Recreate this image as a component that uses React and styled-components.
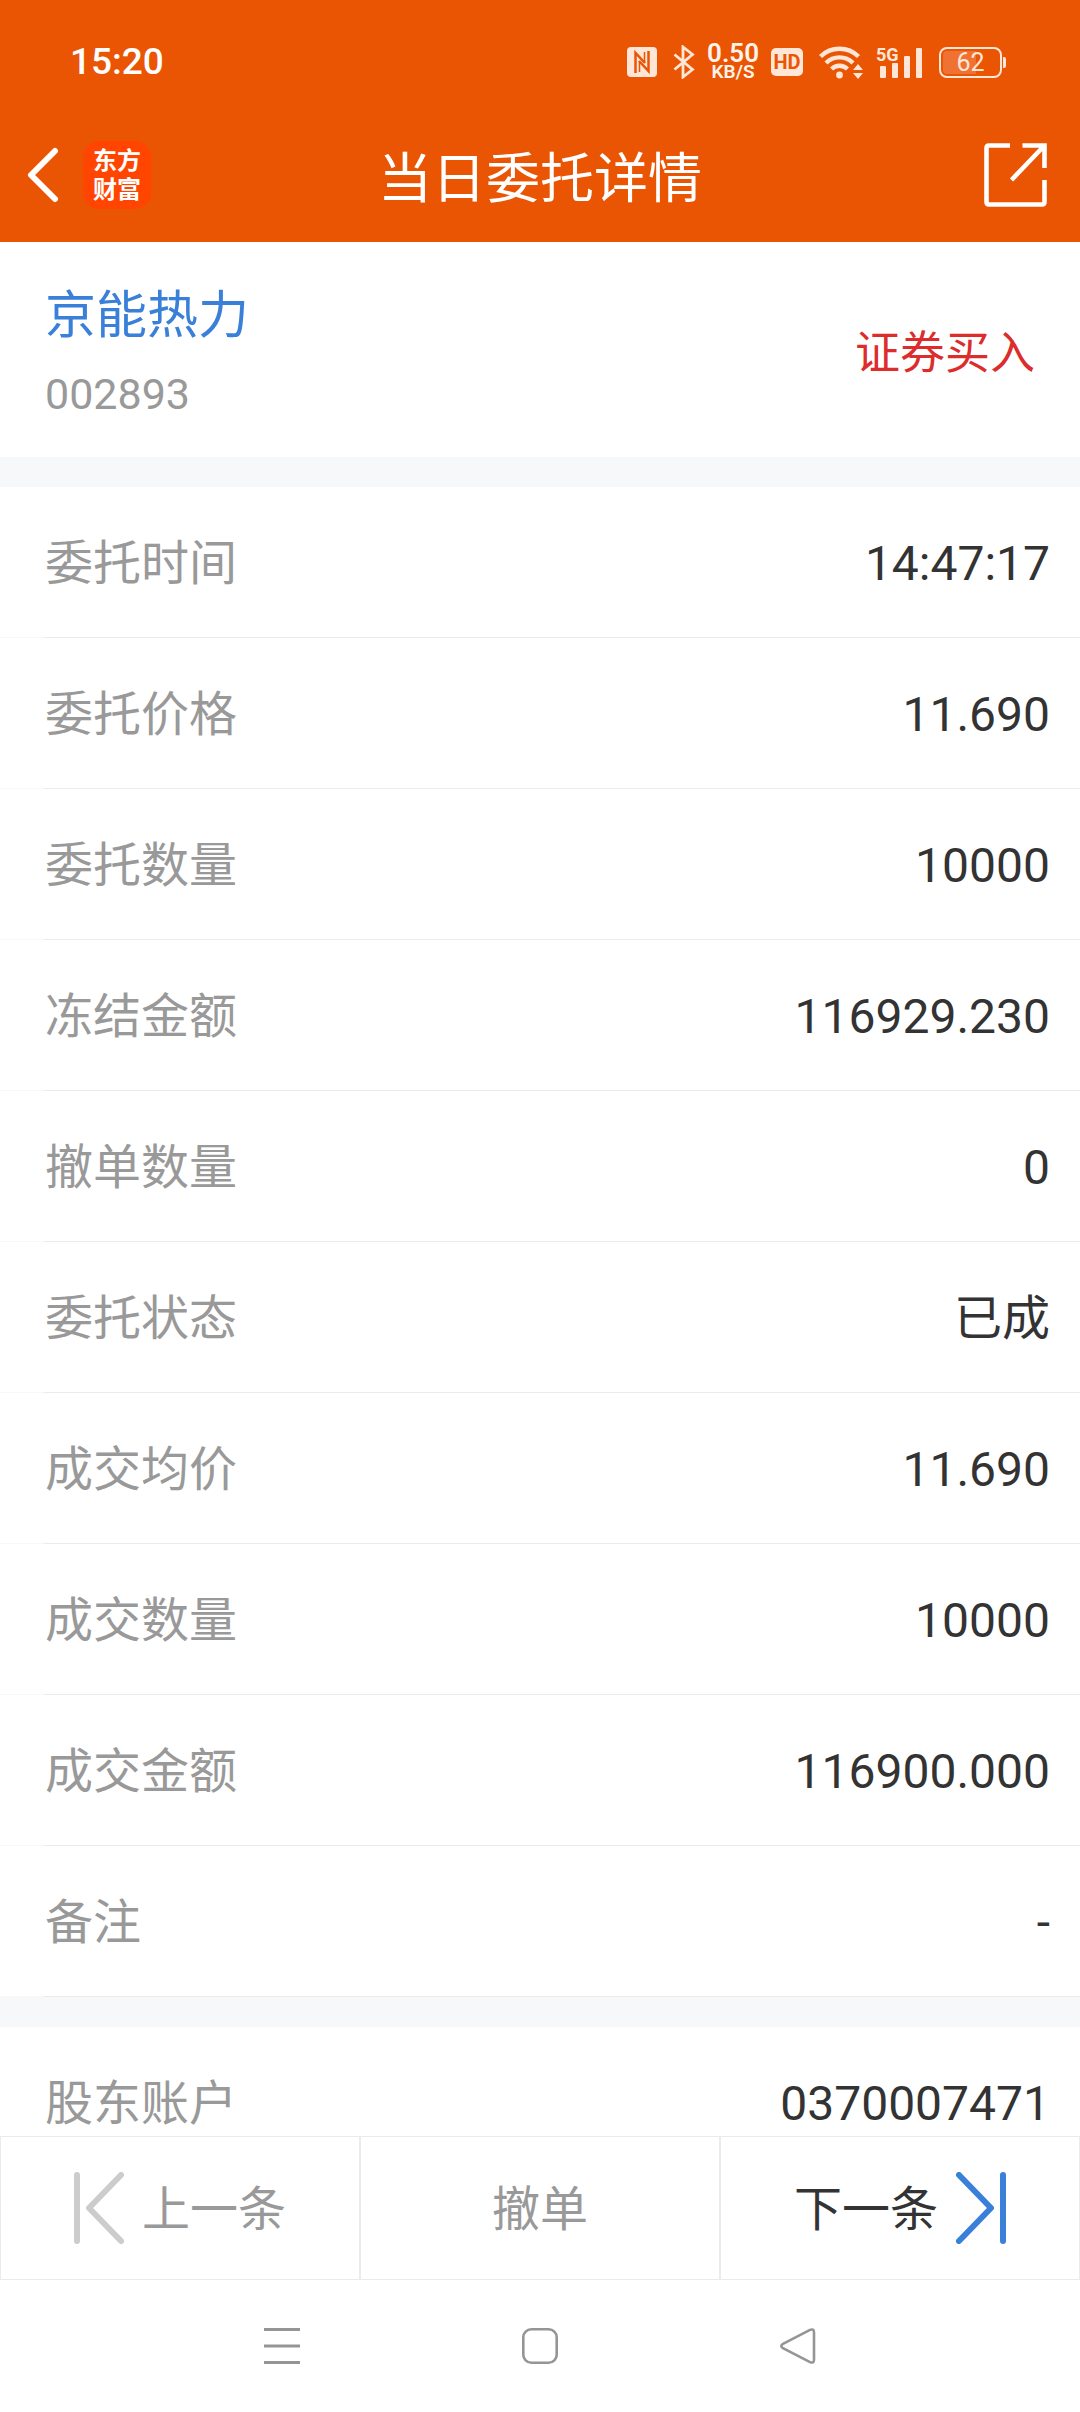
import React from "react";
import styled, { createGlobalStyle } from "styled-components";

const orange = "#ea5504";
const statusTint = "#ffe6d6";

const GlobalStyle = createGlobalStyle`
  * { box-sizing: border-box; }
  body {
    margin: 0;
    background: #fff;
    color: #333;
    font-family: Roboto, "Noto Sans CJK SC", sans-serif;
  }
  button { font: inherit; color: inherit; }
`;

const Screen = styled.div`
  display: flex;
  flex-direction: column;
  height: 100vh;
  background: #fff;
`;

const Top = styled.header`
  flex: none;
  background: ${orange};
  color: #fff;
`;

const StatusBar = styled.div`
  display: flex;
  align-items: center;
  justify-content: space-between;
  height: 108px;
  padding: 16px 74px 0 70px;
`;

const Clock = styled.time`
  font-size: 37px;
  line-height: 44px;
  font-weight: 500;
`;

const StatusIcons = styled.div`
  display: flex;
  align-items: center;
  gap: 16px;
  color: ${statusTint};
`;

const IconGroup = styled.div`
  display: flex;
  align-items: center;
  gap: 12px;
`;

const NetSpeed = styled.div`
  display: flex;
  flex-direction: column;
  align-items: center;
  font-weight: 600;
  color: #fff3ea;
`;

const SpeedValue = styled.span`
  font-size: 26px;
  line-height: 20px;
`;

const SpeedUnit = styled.span`
  font-size: 19px;
  line-height: 18px;
`;

const HdBadge = styled.span`
  width: 32px;
  border-radius: 5px;
  background: ${statusTint};
  color: ${orange};
  font-size: 20px;
  line-height: 28px;
  font-weight: 700;
  text-align: center;
`;

const Battery = styled.div`
  display: flex;
  align-items: center;
  gap: 1px;
  &::after {
    content: "";
    width: 3px;
    height: 11px;
    border-radius: 0 2px 2px 0;
    background: ${statusTint};
  }
`;

const BatteryLevel = styled.span`
  width: 63px;
  padding: 2px;
  border: 2px solid ${statusTint};
  border-radius: 8px;
  background: linear-gradient(to right, #ef7233 60%, transparent 60%) content-box;
  font-size: 25px;
  line-height: 23px;
  text-align: center;
`;

const TitleBar = styled.div`
  display: grid;
  grid-template-columns: 1fr auto 1fr;
  align-items: center;
  height: 134px;
  padding: 0 27px;
`;

const TitleStart = styled.div`
  display: flex;
  align-items: center;
  gap: 24px;
`;

const TitleEnd = styled.div`
  display: flex;
  justify-content: flex-end;
  padding-right: 6px;
`;

const Title = styled.h1`
  margin: 0;
  padding-top: 10px;
  font-size: 54px;
  line-height: 72px;
  font-weight: 400;
`;

const IconButton = styled.button`
  display: flex;
  padding: 0;
  border: 0;
  background: none;
`;

const Logo = styled.div`
  display: flex;
  flex-direction: column;
  align-items: center;
  justify-content: center;
  width: 68px;
  height: 68px;
  padding-bottom: 4px;
  border-radius: 16px;
  background: #ff4500;
  font-family: "Noto Sans CJK SC", sans-serif;
  font-size: 24px;
  line-height: 29px;
  font-weight: 700;
`;

const Content = styled.main`
  flex: 1;
  min-height: 0;
  overflow-y: auto;
  scrollbar-width: none;
`;

const Summary = styled.section`
  display: flex;
  align-items: center;
  justify-content: space-between;
  height: 215px;
  padding: 8px 45px 0;
`;

const Stock = styled.div`
  padding-top: 4px;
`;

const StockName = styled.h2`
  margin: 0;
  font-size: 51px;
  line-height: 76px;
  font-weight: 400;
  color: #3a80d9;
`;

const StockCode = styled.p`
  margin: 0;
  font-size: 43px;
  line-height: 80px;
  color: #999;
`;

const Side = styled.strong`
  font-size: 45px;
  line-height: 60px;
  font-weight: 400;
  color: #dc2c2c;
`;

const Group = styled.dl`
  margin: 0;
  border-top: 30px solid #f6f8fa;
`;

const Row = styled.div`
  display: flex;
  align-items: center;
  justify-content: space-between;
  height: 151px;
  padding: 4px 30px 0 45px;
  border-bottom: 1px solid #ebebeb;
  border-image: linear-gradient(to right, #f8f8f8 45px, #ebebeb 45px) 1;
  font-size: 48px;
  line-height: 72px;
`;

const Label = styled.dt`
  color: #999;
`;

const Value = styled.dd`
  margin: 0;
`;

const Actions = styled.div`
  flex: none;
  display: grid;
  grid-template-columns: repeat(3, 1fr);
  height: 144px;
`;

const Action = styled.button`
  display: flex;
  align-items: center;
  justify-content: center;
  gap: 18px;
  padding: 0;
  border: 1px solid #ebebeb;
  background: #fff;
  font-size: 48px;
  line-height: 72px;
  color: ${(p) => (p.$active ? "#333" : "#999")};
`;

const ActionText = styled.span`
  padding-top: 4px;
`;

const SystemNav = styled.nav`
  flex: none;
  display: flex;
  align-items: center;
  justify-content: center;
  gap: 222px;
  height: 132px;
  color: #959595;
`;

const NfcIcon = () => (
  <svg width="30" height="30" viewBox="0 0 30 30" aria-hidden="true">
    <rect width="30" height="30" rx="4" fill="currentColor" />
    <g fill="none" stroke={orange}>
      <path d="M8.500 26V6L18 16M21.500 4v20L12 14" strokeWidth="2.500" />
      <path d="M12.500 14v11M17.500 5v11" strokeWidth="1.500" />
    </g>
  </svg>
);

const BluetoothIcon = () => (
  <svg width="22" height="34" viewBox="0 0 22 34" fill="none" stroke="currentColor" strokeWidth="2.800" aria-hidden="true">
    <path d="M1.500 9.500L19.500 24.500L10 32V2L19.500 9.500L1.500 24.500" />
  </svg>
);

const WifiIcon = () => (
  <svg width="45" height="36" viewBox="0 0 45 36" fill="none" aria-hidden="true">
    <g stroke="currentColor" strokeWidth="4.400">
      <path d="M1.500 12.500a27 27 0 0 1 38 0" />
      <path d="M7 19a19 19 0 0 1 27 0" />
      <path d="M12.500 25a11.500 11.500 0 0 1 16 0" />
    </g>
    <circle cx="20.500" cy="31" r="3.400" fill="currentColor" />
    <path d="M34 26l5-6 5 6zM34 29h10l-5 6z" fill="currentColor" />
  </svg>
);

const SignalIcon = () => (
  <svg width="47" height="38" viewBox="0 -4 47 38" fill="currentColor" overflow="visible" aria-hidden="true">
    <text x="0" y="14" fontSize="18" fontWeight="700" fontFamily="Roboto, sans-serif">5G</text>
    <rect x="4" y="19" width="6" height="12" rx="1" />
    <rect x="16" y="16" width="6" height="15" rx="1" />
    <rect x="28" y="9" width="6" height="22" rx="1" />
    <rect x="40" y="1" width="6" height="30" rx="1" />
  </svg>
);

const BackIcon = () => (
  <svg width="32" height="56" viewBox="0 0 32 56" fill="none" stroke="currentColor" strokeWidth="6" strokeLinecap="round" aria-hidden="true">
    <path d="M28 4L4 28l24 24" strokeLinejoin="round" />
  </svg>
);

const ShareIcon = () => (
  <svg width="63" height="64" viewBox="0 0 63 64" fill="none" stroke="currentColor" strokeWidth="4.600" aria-hidden="true">
    <path d="M26 2.500H5Q2.500 2.500 2.500 5v54q0 2.500 2.500 2.500h53q2.500 0 2.500-2.500V37" />
    <path d="M38.500 2.500h22V25M60 3L27.500 37" />
  </svg>
);

const StepIcon = ({ next }) => (
  <svg width="50" height="72" viewBox="0 0 50 72" fill="none" stroke={next ? "#3a80d9" : "#ccc"} strokeWidth="6" strokeLinecap="round" strokeLinejoin="round" aria-hidden="true">
    {next ? <path d="M47 3v66M3 3l32 33L3 69" /> : <path d="M3 3v66M47 3L15 36l32 33" />}
  </svg>
);

const orderRows = [
  ["委托时间", "14:47:17"],
  ["委托价格", "11.690"],
  ["委托数量", "10000"],
  ["冻结金额", "116929.230"],
  ["撤单数量", "0"],
  ["委托状态", "已成"],
  ["成交均价", "11.690"],
  ["成交数量", "10000"],
  ["成交金额", "116900.000"],
  ["备注", "-"],
];

const accountRows = [["股东账户", "0370007471"]];

const Rows = ({ items }) => (
  <Group>
    {items.map(([label, value]) => (
      <Row key={label}>
        <Label>{label}</Label>
        <Value>{value}</Value>
      </Row>
    ))}
  </Group>
);

export default function App() {
  return (
    <Screen lang="zh-CN">
      <GlobalStyle />
      <Top>
        <StatusBar>
          <Clock>15:20</Clock>
          <StatusIcons>
            <NfcIcon />
            <IconGroup>
              <BluetoothIcon />
              <NetSpeed>
                <SpeedValue>0.50</SpeedValue>
                <SpeedUnit>KB/S</SpeedUnit>
              </NetSpeed>
              <HdBadge>HD</HdBadge>
            </IconGroup>
            <IconGroup>
              <WifiIcon />
              <SignalIcon />
            </IconGroup>
            <Battery>
              <BatteryLevel>62</BatteryLevel>
            </Battery>
          </StatusIcons>
        </StatusBar>
        <TitleBar>
          <TitleStart>
            <IconButton type="button" aria-label="返回">
              <BackIcon />
            </IconButton>
            <Logo>
              <span>东方</span>
              <span>财富</span>
            </Logo>
          </TitleStart>
          <Title>当日委托详情</Title>
          <TitleEnd>
            <IconButton type="button" aria-label="分享">
              <ShareIcon />
            </IconButton>
          </TitleEnd>
        </TitleBar>
      </Top>
      <Content>
        <Summary>
          <Stock>
            <StockName>京能热力</StockName>
            <StockCode>002893</StockCode>
          </Stock>
          <Side>证券买入</Side>
        </Summary>
        <Rows items={orderRows} />
        <Rows items={accountRows} />
      </Content>
      <Actions>
        <Action type="button">
          <StepIcon />
          <ActionText>上一条</ActionText>
        </Action>
        <Action type="button">
          <ActionText>撤单</ActionText>
        </Action>
        <Action type="button" $active>
          <ActionText>下一条</ActionText>
          <StepIcon next />
        </Action>
      </Actions>
      <SystemNav aria-label="系统导航">
        <IconButton type="button" aria-label="最近任务">
          <svg width="36" height="36" viewBox="0 0 36 36" stroke="currentColor" strokeWidth="3">
            <path d="M0 1.500h36M0 18h36M0 34.500h36" />
          </svg>
        </IconButton>
        <IconButton type="button" aria-label="主屏幕">
          <svg width="36" height="36" viewBox="0 0 36 36" fill="none" stroke="currentColor" strokeWidth="2.600">
            <rect x="1.300" y="1.300" width="33.400" height="33.400" rx="8" />
          </svg>
        </IconButton>
        <IconButton type="button" aria-label="返回上一级">
          <svg width="36" height="36" viewBox="0 0 36 36" fill="none" stroke="currentColor" strokeWidth="2.600">
            <path d="M2.500 16.200L30 1.900q4-1.600 4 2.300v27.600q0 3.900-4 2.300L2.500 19.800q-2.400-1.800 0-3.600z" />
          </svg>
        </IconButton>
      </SystemNav>
    </Screen>
  );
}
